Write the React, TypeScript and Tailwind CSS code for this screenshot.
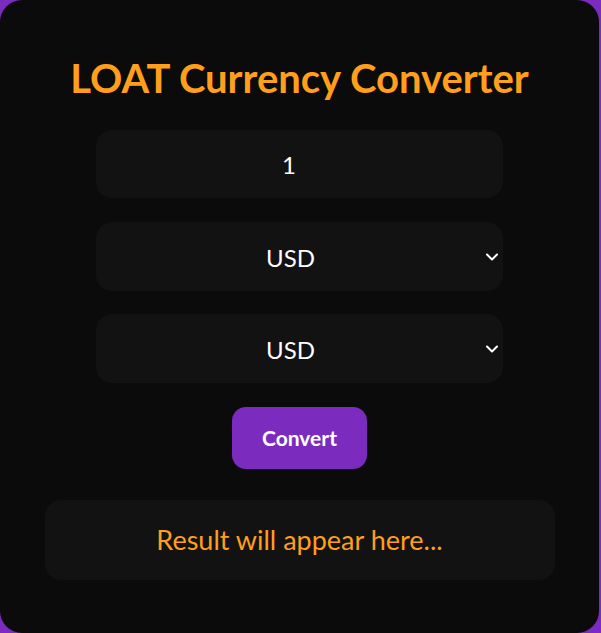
const font = { fontFamily: 'Lato, "Noto Sans", sans-serif' };

const Chevron = () => (
  <svg
    viewBox="0 0 14 8"
    className="absolute right-[4px] top-[31px] w-[14px] h-[8px] pointer-events-none"
    fill="none"
    stroke="white"
    strokeWidth="2"
    strokeLinecap="round"
    strokeLinejoin="round"
  >
    <polyline points="2,1.5 7,6.5 12,1.5" />
  </svg>
);

const CurrencySelect = ({ className }: { className?: string }) => {
  return (
    <div className={"relative w-[407px] " + (className ?? "")}>
      <select
        defaultValue="USD"
        className="w-full h-[69px] appearance-none rounded-2xl bg-[#121212] text-white text-[24px] text-center pr-[18px] pt-[2px] outline-none"
      >
        <option value="USD">USD</option>
        <option value="EUR">EUR</option>
        <option value="GBP">GBP</option>
      </select>
      <Chevron />
    </div>
  );
};

export default function App() {
  return (
    <div className="w-[601px] h-[633px] bg-[#7b2cbf]" style={font}>
      <div className="w-[599px] h-[633px] bg-[#0b0b0b] rounded-[22px] px-[45px] pt-[54px] flex flex-col items-center">
        {/* title */}
        <h1 className="text-[40px] leading-[48px] font-bold text-[#ff9f1c]">
          LOAT Currency Converter
        </h1>

        {/* inputs */}
        <input
          type="number"
          defaultValue={1}
          className="mt-[28px] w-[407px] h-[68px] rounded-2xl bg-[#121212] text-white text-[24px] text-center pr-[6px] outline-none"
        />
        <CurrencySelect className="mt-[24px]" />
        <CurrencySelect className="mt-[23px]" />
        <button className="mt-[24px] w-[135px] h-[62px] rounded-[14px] bg-[#7b2cbf] text-white text-[21px] font-bold">
          Convert
        </button>

        {/* result */}
        <div className="mt-[31px] w-[510px] h-[80px] rounded-2xl bg-[#121212] flex items-center justify-center text-[27px] text-[#ff9f1c]">
          Result will appear here...
        </div>
      </div>
    </div>
  );
}
